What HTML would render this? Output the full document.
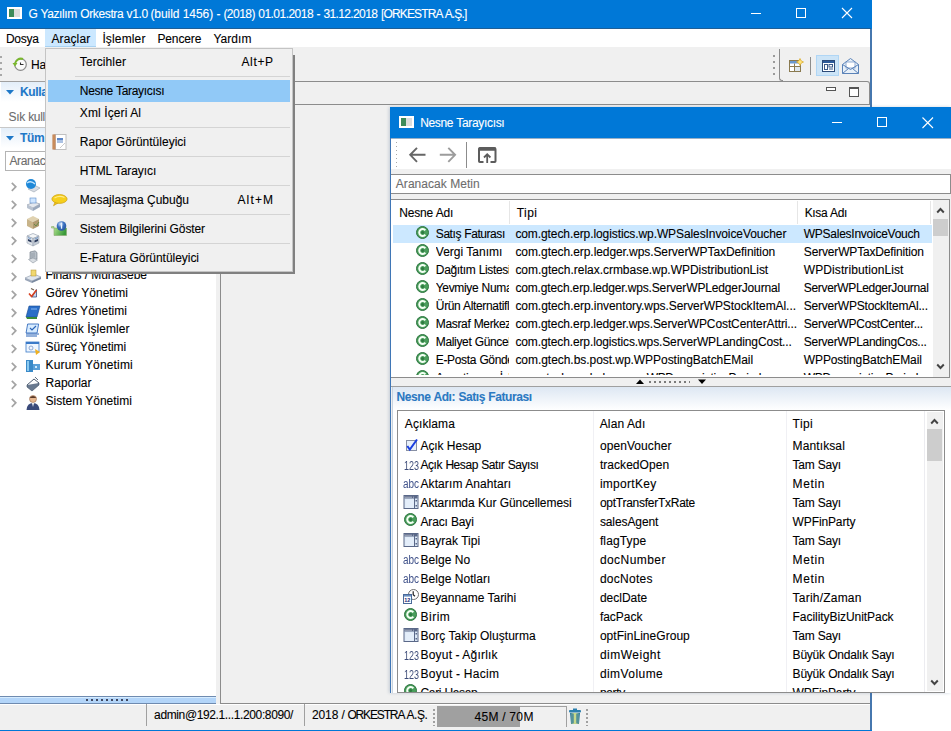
<!DOCTYPE html>
<html><head><meta charset="utf-8">
<style>
*{margin:0;padding:0;box-sizing:border-box}
html,body{width:951px;height:731px;overflow:hidden;background:#fff;position:relative;font-family:"Liberation Sans",sans-serif;font-size:12px;color:#000}
.a{position:absolute}
.t{position:absolute;white-space:nowrap;-webkit-text-stroke:0.1px currentColor}
</style></head><body>
<svg width="0" height="0" style="position:absolute"><defs>
<symbol id="cg" viewBox="0 0 13 13"><circle cx="6.5" cy="6.5" r="6" fill="#4a9e5c" stroke="#2e7440" stroke-width="1"/><path d="M9.3 4.4A3.4 3.4 0 1 0 9.3 8.6" stroke="#f4fff4" stroke-width="2" fill="none"/><circle cx="6.6" cy="6.5" r="1.5" fill="#2e7a40"/></symbol>
<symbol id="chk" viewBox="0 0 17 17"><rect x="5.5" y="4.5" width="10" height="10" fill="#e8f0fa" stroke="#8890a4"/><path d="M6.3 10L8.8 13.5L16 3.5" stroke="#1a3fe0" stroke-width="2" fill="none"/></symbol>
<symbol id="tbl" viewBox="0 0 17 17"><rect x="1" y="2.5" width="14" height="13" fill="#dce8f6" stroke="#5a6888"/><rect x="1.5" y="3" width="13" height="2.5" fill="#5a6888"/><path d="M2.5 4.2H9M10.5 4.2H11.5" stroke="#fff" stroke-width="1" stroke-dasharray="1 1"/><path d="M11.5 3V15.5" stroke="#5a6888"/><rect x="12.5" y="7" width="1.5" height="1.5" fill="#5a6888"/><rect x="12.5" y="12" width="1.5" height="1.5" fill="#5a6888"/><rect x="2.5" y="6.5" width="8.5" height="8.5" fill="#e4eefa"/></symbol>
<symbol id="cal" viewBox="0 0 18 17"><circle cx="11.5" cy="6.5" r="5" fill="#fff" stroke="#707070" stroke-width="1"/><path d="M11.2 3.3V6.8L13 8.3" stroke="#222" stroke-width="1.2" fill="none"/><rect x="1.5" y="6.5" width="8" height="9" fill="#fff" stroke="#4a6a9a"/><rect x="2" y="7" width="7" height="1.6" fill="#6a90c0"/><text x="2.3" y="14.3" font-family="Liberation Sans" font-weight="bold" font-size="5.5" fill="#1a2a7a">12</text></symbol>
<symbol id="chev" viewBox="0 0 8 10"><path d="M1.8 0.8L5.8 4.8L1.8 8.8" stroke="#a4a4a4" stroke-width="1.7" fill="none"/></symbol>
</defs></svg>
<div class="a" style="left:0;top:0;width:872px;height:731px;background:#f0f0f0"></div>
<div class="a" style="left:0;top:0;width:872px;height:29px;background:#0078d7"></div>
<div class="a" style="left:0;top:28px;width:871px;height:1px;background:#1f5f96"></div>
<div class="a" style="left:7px;top:7px;width:15px;height:12px;background:#fff"></div>
<div class="a" style="left:9px;top:9px;width:5px;height:8px;background:#3d8b5a"></div>
<div class="a" style="left:14px;top:9px;width:6px;height:8px;background:#ddd"></div>
<div class="t" style="left:28.4px;top:5px;line-height:18px;height:18px;letter-spacing:-0.376px;word-spacing:0.376px;color:#fff">G Yazılım Orkestra v1.0</div>
<div class="t" style="left:150.4px;top:5px;line-height:18px;height:18px;letter-spacing:-0.064px;word-spacing:0.064px;color:#fff">(build 1456) -</div>
<div class="t" style="left:223.4px;top:5px;line-height:18px;height:18px;letter-spacing:-0.526px;word-spacing:0.526px;color:#fff">(2018) 01.01.2018 -</div>
<div class="t" style="left:323.4px;top:5px;line-height:18px;height:18px;letter-spacing:-0.618px;word-spacing:0.618px;color:#fff">31.12.2018</div>
<div class="t" style="left:380.9px;top:5px;line-height:18px;height:18px;letter-spacing:-0.838px;word-spacing:0.838px;color:#fff">[ORKESTRA A.Ş.]</div>
<div class="a" style="left:751px;top:13px;width:10px;height:1px;background:#fff"></div>
<div class="a" style="left:796px;top:8px;width:10px;height:10px;border:1px solid #fff"></div>
<svg class="a" style="left:841px;top:7px" width="12" height="12"><path d="M1 1L11 11M11 1L1 11" stroke="#fff" stroke-width="1.1"/></svg>
<div class="a" style="left:870px;top:29px;width:2px;height:702px;background:#4677ae"></div>
<div class="a" style="left:0;top:29px;width:870px;height:18px;background:#fff"></div>
<div class="a" style="left:45px;top:29px;width:51px;height:18px;background:#cce8ff;border-bottom:1px solid #a8d2f2"></div>
<div class="t" style="left:5.9px;top:30px;line-height:18px;height:18px;letter-spacing:-0.253px;word-spacing:0.253px">Dosya</div>
<div class="t" style="left:51.4px;top:30px;line-height:18px;height:18px;letter-spacing:0.132px;word-spacing:-0.132px">Araçlar</div>
<div class="t" style="left:102.4px;top:30px;line-height:18px;height:18px;letter-spacing:0.142px;word-spacing:-0.142px">İşlemler</div>
<div class="t" style="left:157.4px;top:30px;line-height:18px;height:18px;letter-spacing:-0.116px;word-spacing:0.116px">Pencere</div>
<div class="t" style="left:213.4px;top:30px;line-height:18px;height:18px;letter-spacing:0.043px;word-spacing:-0.043px">Yardım</div>
<div class="a" style="left:0;top:81px;width:215px;height:1px;background:#a0a0a0"></div>
<div class="a" style="left:0;top:56px;width:2px;height:20px;background:repeating-linear-gradient(#a8a8a8 0 2px,transparent 2px 6px)"></div>
<svg class="a" style="left:11px;top:57px" width="17" height="15" viewBox="0 0 17 15"><circle cx="9.5" cy="7.5" r="5.8" fill="#fafafa" stroke="#8a8a8a" stroke-width="1.2"/><path d="M9.5 5.5V7.5H12.5" stroke="#333" stroke-width="1.1" fill="none"/><path d="M4 7.5A6 6 0 0 1 12 2" stroke="#7ab82e" stroke-width="2" fill="none"/><path d="M1.5 6L4 9.5L6.5 6Z" fill="#7ab82e"/></svg>
<div class="t" style="left:31.1px;top:56px;line-height:18px;height:18px;letter-spacing:-0.350px;word-spacing:0.350px">Hazır</div>
<div class="a" style="left:773px;top:55px;width:2px;height:21px;background:repeating-linear-gradient(#9a9a9a 0 2px,transparent 2px 6px)"></div>
<div class="a" style="left:779px;top:49px;width:4px;height:32px;border-left:1px solid #8c8c8c;border-bottom:1px solid #8c8c8c;border-bottom-left-radius:3px"></div>
<svg class="a" style="left:789px;top:58px" width="15" height="15" viewBox="0 0 15 15"><rect x="0.5" y="2.5" width="11" height="11" fill="#fff" stroke="#8a7a50"/><rect x="1" y="3" width="10" height="2.5" fill="#6a98d0"/><path d="M0.5 8.5H11.5M5.5 5.5V13.5" stroke="#8a7a50"/><rect x="6" y="9" width="5" height="4" fill="#dfe8f0"/><path d="M11 0.5L12.2 2.8L14.5 4L12.2 5.2L11 7.5L9.8 5.2L7.5 4L9.8 2.8Z" fill="#ffe680" stroke="#d9a520" stroke-width="0.7"/></svg>
<div class="a" style="left:810px;top:57px;width:1px;height:18px;background:#8c8c8c"></div>
<div class="a" style="left:816px;top:55px;width:23px;height:21px;background:#cce4f7;border:1px solid #b0d6f5"></div>
<svg class="a" style="left:822px;top:60px" width="14" height="13" viewBox="0 0 14 13"><rect x="0.5" y="0.5" width="12" height="11" fill="#fff" stroke="#2c4a78"/><rect x="1" y="1" width="11" height="2" fill="#2c5a9a"/><rect x="2.5" y="4.5" width="3" height="5" fill="#fff" stroke="#3a5a8a"/><rect x="7" y="4.5" width="3.5" height="2.5" fill="#fff" stroke="#3a5a8a"/><path d="M7 9H11" stroke="#3a5a8a"/></svg>
<svg class="a" style="left:842px;top:58px" width="17" height="16" viewBox="0 0 17 16"><path d="M0.5 6.5L8.5 0.5L16.5 6.5V15.5H0.5Z" fill="#e8f0f8" stroke="#5a82b8"/><rect x="4" y="4" width="9" height="6" fill="#fff" stroke="#7a9ac8" stroke-width="0.8"/><path d="M0.5 6.5L8.5 11.5L16.5 6.5M0.5 15.5L6.5 10.5M16.5 15.5L10.5 10.5" stroke="#5a82b8" fill="none"/></svg>
<div class="a" style="left:0;top:82px;width:216px;height:614px;background:#fff"></div>
<div class="a" style="left:1px;top:82px;width:215px;height:20px;background:linear-gradient(#e3eef9,#fff)"></div>
<svg class="a" style="left:6px;top:90px" width="8" height="5"><path d="M0 0H8L4 4.5Z" fill="#1e78c8"/></svg>
<div class="t" style="left:20.0px;top:83px;line-height:18px;height:18px;letter-spacing:-0.350px;word-spacing:0.350px;font-weight:bold;color:#1e78c8">Kullanıcı Menüsü</div>
<div class="t" style="left:8.6px;top:108px;line-height:18px;height:18px;letter-spacing:-0.350px;word-spacing:0.350px;color:#6d6d6d">Sık kullanılanlar</div>
<div class="a" style="left:0;top:127px;width:216px;height:1px;background:#c8c8c8"></div>
<div class="a" style="left:1px;top:128px;width:215px;height:20px;background:linear-gradient(#e3eef9,#fff)"></div>
<svg class="a" style="left:6px;top:136px" width="8" height="5"><path d="M0 0H8L4 4.5Z" fill="#1e78c8"/></svg>
<div class="t" style="left:20.0px;top:129px;line-height:18px;height:18px;letter-spacing:-0.350px;word-spacing:0.350px;font-weight:bold;color:#1e78c8">Tüm Menüler</div>
<div class="a" style="left:5px;top:151px;width:206px;height:20px;border:1px solid #b4b4b4;background:#fff"></div>
<div class="t" style="left:9.4px;top:152px;line-height:18px;height:18px;letter-spacing:-0.350px;word-spacing:0.350px;color:#6d6d6d">Aranacak Metin</div>
<svg class="a" style="left:10px;top:182px" width="8" height="10"><use href="#chev"/></svg>
<svg class="a" style="left:25px;top:178px" width="16" height="16" viewBox="0 0 16 16"><path d="M3 11L9 7L15 10L9 14Z" fill="#d8dde4" stroke="#9aa4b0" stroke-width="0.6"/><circle cx="6" cy="6" r="5" fill="#1e88d8"/><path d="M2 5Q6 2 10 6" stroke="#bfe4ff" stroke-width="1.3" fill="none"/></svg>
<div class="t" style="left:45.6px;top:176px;line-height:18px;height:18px;letter-spacing:-0.350px;word-spacing:0.350px">Genel Tanımlar</div>
<svg class="a" style="left:10px;top:200px" width="8" height="10"><use href="#chev"/></svg>
<svg class="a" style="left:25px;top:196px" width="16" height="16" viewBox="0 0 16 16"><path d="M2 9L9 6L15 8L8 12Z" fill="#e4e8ee" stroke="#8a94a4" stroke-width="0.6"/><path d="M2 9V12L8 15V12Z" fill="#b8c2d0"/><path d="M8 12V15L15 11V8Z" fill="#9aa8bc"/><rect x="5" y="2" width="6" height="5" fill="#cfe6ff" stroke="#5a8ac8" stroke-width="0.6"/></svg>
<div class="t" style="left:45.6px;top:194px;line-height:18px;height:18px;letter-spacing:-0.350px;word-spacing:0.350px">Satış Yönetimi</div>
<svg class="a" style="left:10px;top:218px" width="8" height="10"><use href="#chev"/></svg>
<svg class="a" style="left:25px;top:214px" width="16" height="16" viewBox="0 0 16 16"><path d="M2 5L8 2L14 5L8 8Z" fill="#e0d2b0"/><path d="M2 5V12L8 15V8Z" fill="#c8b48a"/><path d="M8 8V15L14 12V5Z" fill="#b09a70"/><path d="M9 10L11 12L14 8" stroke="#6a8a4a" stroke-width="1" fill="none"/></svg>
<div class="t" style="left:45.6px;top:212px;line-height:18px;height:18px;letter-spacing:-0.350px;word-spacing:0.350px">Stok Yönetimi</div>
<svg class="a" style="left:10px;top:236px" width="8" height="10"><use href="#chev"/></svg>
<svg class="a" style="left:25px;top:232px" width="16" height="15" viewBox="0 0 16 15"><path d="M2 4L8 1.5L14 4L8 6.5Z" fill="#f4f6f8" stroke="#8a96a6" stroke-width="0.6"/><path d="M2 4V11L8 14V6.5Z" fill="#dfe4ea" stroke="#8a96a6" stroke-width="0.5"/><path d="M8 6.5V14L14 11V4Z" fill="#c4ccd6" stroke="#8a96a6" stroke-width="0.5"/><path d="M3 7L6.5 8.5V10.5L3 9Z" fill="#2a3a5a"/><path d="M9.5 8.5L13 7V9L9.5 10.5Z" fill="#2a3a5a"/><path d="M3 5.5L6 7M13 5.5L10 7" stroke="#5a8ac8" stroke-width="0.8"/></svg>
<div class="t" style="left:45.6px;top:230px;line-height:18px;height:18px;letter-spacing:-0.350px;word-spacing:0.350px">Üretim Yönetimi</div>
<svg class="a" style="left:10px;top:254px" width="8" height="10"><use href="#chev"/></svg>
<svg class="a" style="left:27px;top:250px" width="12" height="14" viewBox="0 0 12 14"><path d="M3 2L8 0.8L10 2.5V9L5 10.5L3 9Z" fill="#b8c0c8" stroke="#6a7480" stroke-width="0.6"/><path d="M1.5 9.5L6 8L10.5 10L6 13Z" fill="#d8dde2" stroke="#7a8490" stroke-width="0.5"/><path d="M5 3V8M7 2.5V7.5" stroke="#8a949e" stroke-width="0.8"/></svg>
<div class="t" style="left:45.6px;top:248px;line-height:18px;height:18px;letter-spacing:-0.350px;word-spacing:0.350px">Bakım Yönetimi</div>
<svg class="a" style="left:10px;top:272px" width="8" height="10"><use href="#chev"/></svg>
<svg class="a" style="left:24px;top:268px" width="18" height="16" viewBox="0 0 18 16"><path d="M1 10L10 6L17 9L8 13Z" fill="#dfe6ee" stroke="#8a96a8" stroke-width="0.6"/><path d="M1 10V12L8 15V13Z" fill="#9aa6b8"/><path d="M8 13V15L17 11V9Z" fill="#7a8aa0"/><rect x="7" y="2" width="5" height="6" fill="#f0d870" stroke="#b09030" stroke-width="0.5"/></svg>
<div class="t" style="left:45.6px;top:266px;line-height:18px;height:18px;letter-spacing:-0.047px;word-spacing:0.047px">Finans / Muhasebe</div>
<svg class="a" style="left:10px;top:290px" width="8" height="10"><use href="#chev"/></svg>
<svg class="a" style="left:27px;top:287px" width="12" height="12" viewBox="0 0 12 12"><path d="M4 1.5L7 3" stroke="#706050" stroke-width="1.2"/><path d="M9.5 2.5V10H5Z" fill="#c8d8f0" stroke="#2a3a6a" stroke-width="0.7"/><path d="M2 6.5L4.5 9.5L9.5 3" stroke="#d84020" stroke-width="1.6" fill="none"/></svg>
<div class="t" style="left:45.6px;top:284px;line-height:18px;height:18px;letter-spacing:-0.008px;word-spacing:0.008px">Görev Yönetimi</div>
<svg class="a" style="left:10px;top:308px" width="8" height="10"><use href="#chev"/></svg>
<svg class="a" style="left:25px;top:304px" width="16" height="16" viewBox="0 0 16 16"><path d="M4 2H15L12 13H1Z" fill="#2a6ec8" stroke="#1a4a90" stroke-width="0.6"/><path d="M1 13L2 15H12L12 13" fill="#3a8a3a"/><path d="M6 5H12" stroke="#9ccaff" stroke-width="0.8"/></svg>
<div class="t" style="left:45.6px;top:302px;line-height:18px;height:18px;letter-spacing:0.011px;word-spacing:-0.011px">Adres Yönetimi</div>
<svg class="a" style="left:10px;top:326px" width="8" height="10"><use href="#chev"/></svg>
<svg class="a" style="left:25px;top:322px" width="16" height="16" viewBox="0 0 16 16"><rect x="3" y="2" width="11" height="9" fill="#d8ecff" stroke="#2a64b8" stroke-width="0.8" transform="skewX(-10)"/><path d="M5 6L7 8L11 4" stroke="#2a64b8" stroke-width="1.2" fill="none"/><path d="M1 12H14M1 14H12" stroke="#2a64b8" stroke-width="1"/></svg>
<div class="t" style="left:45.6px;top:320px;line-height:18px;height:18px;letter-spacing:0.034px;word-spacing:-0.034px">Günlük İşlemler</div>
<svg class="a" style="left:10px;top:344px" width="8" height="10"><use href="#chev"/></svg>
<svg class="a" style="left:25px;top:340px" width="16" height="16" viewBox="0 0 16 16"><rect x="1" y="2" width="13" height="10" fill="#eef6ff" stroke="#3a7ac8" stroke-width="0.8"/><rect x="1" y="2" width="13" height="2" fill="#3a7ac8"/><circle cx="6" cy="8" r="2" fill="none" stroke="#6a8ac0" stroke-width="0.7"/><path d="M10 9L15 12L11 15Z" fill="#f0b020"/></svg>
<div class="t" style="left:45.6px;top:338px;line-height:18px;height:18px;letter-spacing:-0.047px;word-spacing:0.047px">Süreç Yönetimi</div>
<svg class="a" style="left:10px;top:362px" width="8" height="10"><use href="#chev"/></svg>
<svg class="a" style="left:25px;top:358px" width="16" height="16" viewBox="0 0 16 16"><rect x="1" y="2" width="7" height="12" fill="#3a8ac8"/><rect x="2" y="3" width="2" height="10" fill="#8ccaf0"/><rect x="8" y="6" width="7" height="6" fill="#5aa0d8"/><rect x="10" y="8" width="2" height="2" fill="#d0ecff"/></svg>
<div class="t" style="left:45.6px;top:356px;line-height:18px;height:18px;letter-spacing:0.170px;word-spacing:-0.170px">Kurum Yönetimi</div>
<svg class="a" style="left:10px;top:380px" width="8" height="10"><use href="#chev"/></svg>
<svg class="a" style="left:25px;top:376px" width="16" height="16" viewBox="0 0 16 16"><path d="M2 9L9 3L14 7L7 13Z" fill="#fff" stroke="#3a4a60" stroke-width="0.9"/><path d="M2 9V11L7 15L14 9V7" fill="#6a7a90" stroke="#3a4a60" stroke-width="0.6"/><path d="M10 1L13 4" stroke="#3a4a60" stroke-width="0.8"/></svg>
<div class="t" style="left:45.6px;top:374px;line-height:18px;height:18px;letter-spacing:-0.017px;word-spacing:0.017px">Raporlar</div>
<svg class="a" style="left:10px;top:398px" width="8" height="10"><use href="#chev"/></svg>
<svg class="a" style="left:25px;top:394px" width="16" height="16" viewBox="0 0 16 16"><circle cx="8" cy="5" r="3.5" fill="#e8b890" stroke="#8a5a3a" stroke-width="0.5"/><path d="M4.5 4Q8 0 11.5 4" fill="#5a3a2a"/><path d="M1.5 16Q2 9 8 9Q14 9 14.5 16Z" fill="#3a4a7a"/><path d="M7 9L8 13L9 9Z" fill="#fff"/></svg>
<div class="t" style="left:45.6px;top:392px;line-height:18px;height:18px;letter-spacing:-0.015px;word-spacing:0.015px">Sistem Yönetimi</div>
<div class="a" style="left:0;top:696px;width:216px;height:8px;background:linear-gradient(#6f8bb0 0 1px,#d6ecff 1px 2px,#b3d5f9 2px 7px,#6f8bb0 7px 8px)"></div>
<div class="a" style="left:86px;top:699px;width:43px;height:2px;background:repeating-linear-gradient(90deg,#404860 0 2px,transparent 2px 5px)"></div>
<div class="a" style="left:220px;top:81px;width:650px;height:623px;border-left:1px solid #8c8c8c;border-bottom:1px solid #8c8c8c;background:#f0f0f0"></div>
<div class="a" style="left:220px;top:81px;width:650px;height:24px;border-top:1px solid #8c8c8c;border-bottom:1px solid #8c8c8c;border-right:1px solid #8c8c8c;border-top-right-radius:3px;background:#f0f0f0"></div>
<div class="a" style="left:826px;top:87px;width:10px;height:4px;border:1px solid #555;background:#fff"></div>
<div class="a" style="left:849px;top:87px;width:10px;height:10px;border:1px solid #555;border-top-width:2px;background:#fff"></div>
<div class="a" style="left:0;top:704px;width:870px;height:26px;background:#f0f0f0;border-top:1px solid #fff"></div>
<div class="a" style="left:0;top:730px;width:872px;height:1px;background:#0078d7"></div>
<div class="a" style="left:146px;top:704px;width:1px;height:22px;background:#a0a0a0"></div>
<div class="t" style="left:154.1px;top:706px;line-height:18px;height:18px;letter-spacing:-0.375px;word-spacing:0.375px">admin@192.1...1.200:8090/</div>
<div class="a" style="left:304px;top:704px;width:1px;height:22px;background:#a0a0a0"></div>
<div class="t" style="left:311.9px;top:706px;line-height:18px;height:18px;letter-spacing:-0.091px;word-spacing:0.091px">2018 /</div>
<div class="t" style="left:347.4px;top:706px;line-height:18px;height:18px;letter-spacing:-1.145px;word-spacing:1.145px">ORKESTRA</div>
<div class="t" style="left:406.4px;top:706px;line-height:18px;height:18px;letter-spacing:-0.392px;word-spacing:0.392px">A.Ş.</div>
<div class="a" style="left:433px;top:709px;width:2px;height:17px;background:repeating-linear-gradient(#a0a0a0 0 2px,transparent 2px 4px)"></div>
<div class="a" style="left:437px;top:706px;width:130px;height:21px;background:#f0f0f0;border-top:1px solid #a0a0a0;border-right:1px solid #a0a0a0"></div>
<div class="a" style="left:437px;top:707px;width:83px;height:20px;background:#a0a0a0"></div>
<div class="t" style="left:474.4px;top:708px;line-height:18px;height:18px;letter-spacing:0.385px;word-spacing:-0.385px">45M / 70M</div>
<svg class="a" style="left:568px;top:708px" width="14" height="17" viewBox="0 0 14 17"><defs><linearGradient id="tg" x1="0" x2="1"><stop offset="0" stop-color="#1c6fa0"/><stop offset=".5" stop-color="#d8e48a"/><stop offset="1" stop-color="#1c6fa0"/></linearGradient></defs><rect x="1" y="2" width="12" height="2.5" rx="1" fill="#2a7fae"/><rect x="5" y="0.5" width="4" height="2" fill="#2a7fae"/><path d="M2 5H12L11 16H3Z" fill="url(#tg)"/><path d="M5 6V15M9 6V15" stroke="#1c6fa0" stroke-width="0.8"/></svg>
<div class="a" style="left:586px;top:709px;width:2px;height:17px;background:repeating-linear-gradient(#a0a0a0 0 2px,transparent 2px 4px)"></div>
<div class="a" style="left:52px;top:55px;width:242.5px;height:218.5px;background:#808080;filter:blur(0.6px)"></div>
<div class="a" style="left:45px;top:48px;width:248px;height:224px;background:#f0f0f0;border:1px solid #c4c4c4"></div>
<div class="a" style="left:48px;top:80px;width:242px;height:22px;background:#91c9f7"></div>
<div class="a" style="left:75px;top:76px;width:215px;height:1px;background:#d4d4d4"></div>
<div class="a" style="left:75px;top:127px;width:215px;height:1px;background:#d4d4d4"></div>
<div class="a" style="left:75px;top:156px;width:215px;height:1px;background:#d4d4d4"></div>
<div class="a" style="left:75px;top:185px;width:215px;height:1px;background:#d4d4d4"></div>
<div class="a" style="left:75px;top:214px;width:215px;height:1px;background:#d4d4d4"></div>
<div class="a" style="left:75px;top:243px;width:215px;height:1px;background:#d4d4d4"></div>
<div class="t" style="left:79.8px;top:53px;line-height:18px;height:18px;letter-spacing:0.094px;word-spacing:-0.094px">Tercihler</div>
<div class="t" style="left:241.4px;top:53px;line-height:18px;height:18px;letter-spacing:0.671px;word-spacing:-0.671px">Alt+P</div>
<div class="t" style="left:79.8px;top:82px;line-height:18px;height:18px;letter-spacing:-0.319px;word-spacing:0.319px">Nesne Tarayıcısı</div>
<div class="t" style="left:79.8px;top:104px;line-height:18px;height:18px;letter-spacing:0.125px;word-spacing:-0.125px">Xml İçeri Al</div>
<div class="t" style="left:79.8px;top:133px;line-height:18px;height:18px;letter-spacing:0.009px;word-spacing:-0.009px">Rapor Görüntüleyici</div>
<div class="t" style="left:79.8px;top:162px;line-height:18px;height:18px;letter-spacing:-0.083px;word-spacing:0.083px">HTML Tarayıcı</div>
<div class="t" style="left:79.8px;top:191px;line-height:18px;height:18px;letter-spacing:-0.013px;word-spacing:0.013px">Mesajlaşma Çubuğu</div>
<div class="t" style="left:237.4px;top:191px;line-height:18px;height:18px;letter-spacing:1.173px;word-spacing:-1.173px">Alt+M</div>
<div class="t" style="left:79.8px;top:220px;line-height:18px;height:18px;letter-spacing:-0.094px;word-spacing:0.094px">Sistem Bilgilerini Göster</div>
<div class="t" style="left:79.8px;top:249px;line-height:18px;height:18px;letter-spacing:-0.042px;word-spacing:0.042px">E-Fatura Görüntüleyici</div>
<svg class="a" style="left:52px;top:134px" width="15" height="16" viewBox="0 0 15 16"><rect x="3" y="0.5" width="11" height="15" fill="#fff" stroke="#c0c0c0"/><rect x="0.5" y="0.5" width="3" height="15" fill="#b06a3a"/><path d="M0.5 2H3M0.5 4H3M0.5 6H3M0.5 8H3M0.5 10H3M0.5 12H3M0.5 14H3" stroke="#f0c090" stroke-width="0.8"/><rect x="5" y="4" width="6" height="2.5" fill="#5b86c8"/><rect x="5" y="7.5" width="6" height="1" fill="#5b86c8"/><path d="M8 14L13 9" stroke="#aaa" stroke-width="0.6"/></svg>
<svg class="a" style="left:51px;top:194px" width="17" height="13" viewBox="0 0 17 13"><path d="M4 8L2.5 11.8L7 9Z" fill="#f2c418" stroke="#c89a10" stroke-width="0.6"/><ellipse cx="8.5" cy="5" rx="7.6" ry="4.4" fill="#f6cf1c" stroke="#d0a514" stroke-width="0.8"/><path d="M3.5 4Q8.5 1.2 13.5 3.5" stroke="#ffeb8a" stroke-width="1.2" fill="none"/></svg>
<svg class="a" style="left:51px;top:221px" width="16" height="15" viewBox="0 0 16 15"><defs><linearGradient id="sg" x1="0" x2="1" y1="0" y2="0.3"><stop offset="0" stop-color="#c8f0a0"/><stop offset="1" stop-color="#3a9a3a"/></linearGradient><radialGradient id="bg2" cx=".4" cy=".3" r=".7"><stop offset="0" stop-color="#d8e8ff"/><stop offset=".5" stop-color="#3a70c0"/><stop offset="1" stop-color="#2a58a0"/></radialGradient></defs><path d="M0.5 5.5H3V14.5H15.5V7H0.5Z" fill="url(#sg)" stroke="#8aa870" stroke-width="0.6"/><circle cx="10.5" cy="5" r="4.8" fill="url(#bg2)"/><rect x="9.9" y="3.2" width="1.3" height="4.5" fill="#f0f8ff"/><circle cx="10.55" cy="2.2" r="0.7" fill="#f0f8ff"/></svg>
<div class="a" style="left:390px;top:107px;width:561px;height:586px;background:#f0f0f0;border-left:1px solid #3f76b6;box-shadow:-1px 0 3px rgba(60,90,130,.25)"></div>
<div class="a" style="left:390px;top:107px;width:561px;height:31px;background:#0078d7"></div>
<div class="a" style="left:399px;top:116px;width:15px;height:12px;background:#fff"></div>
<div class="a" style="left:401px;top:118px;width:5px;height:8px;background:#3d8b5a"></div>
<div class="a" style="left:406px;top:118px;width:6px;height:8px;background:#ddd"></div>
<div class="t" style="left:420.2px;top:114px;line-height:18px;height:18px;letter-spacing:-0.333px;word-spacing:0.333px;color:#fff">Nesne Tarayıcısı</div>
<div class="a" style="left:832px;top:122px;width:10px;height:1px;background:#fff"></div>
<div class="a" style="left:877px;top:117px;width:10px;height:10px;border:1px solid #fff"></div>
<svg class="a" style="left:922px;top:117px" width="12" height="12"><path d="M0.5 0.5L11 11M11 0.5L0.5 11" stroke="#fff" stroke-width="1.1"/></svg>
<div class="a" style="left:391px;top:138px;width:560px;height:31px;background:#fff"></div>
<div class="a" style="left:391px;top:138px;width:560px;height:1px;background:#9ab0c6"></div>
<div class="a" style="left:396px;top:142px;width:1px;height:26px;background:repeating-linear-gradient(#a8a8a8 0 1px,transparent 1px 4px)"></div>
<svg class="a" style="left:408px;top:146px" width="18" height="17" viewBox="0 0 18 17"><path d="M17.5 8.8H2.5M9 1.8L2.2 8.8L9 15.8" stroke="#666" stroke-width="1.9" fill="none"/></svg>
<svg class="a" style="left:439px;top:146px" width="18" height="17" viewBox="0 0 18 17"><path d="M0.8 8.8H15.8M9.3 1.8L16.1 8.8L9.3 15.8" stroke="#9c9c9c" stroke-width="1.9" fill="none"/></svg>
<div class="a" style="left:466px;top:142px;width:1px;height:26px;background:#8c8c8c"></div>
<svg class="a" style="left:477px;top:146px" width="20" height="18" viewBox="0 0 20 18"><path d="M6.5 16H2.8Q2 16 2 15.2V3.5Q2 2 3.5 2H17Q18.5 2 18.5 3.5V15.2Q18.5 16 17.7 16H13.5" stroke="#5c5c5c" stroke-width="2" fill="none"/><rect x="1.5" y="1.2" width="17.5" height="3.5" rx="1" fill="#5c5c5c"/><path d="M10.2 17V8.5M7 11.5L10.2 8.2L13.4 11.5" stroke="#5c5c5c" stroke-width="1.8" fill="none"/></svg>
<div class="a" style="left:391px;top:174px;width:560px;height:20px;background:#fff;border-top:1px solid #8c8c8c;border-bottom:1px solid #8c8c8c"></div>
<div class="a" style="left:950px;top:174px;width:1px;height:20px;background:#8c8c8c"></div>
<div class="t" style="left:395.8px;top:175px;line-height:18px;height:18px;letter-spacing:0.044px;word-spacing:-0.044px;color:#6d6d6d">Aranacak Metin</div>
<div class="a" style="left:391px;top:199px;width:559px;height:179px;background:#fff;border-top:1px solid #8c8c8c;border-right:1px solid #8c8c8c;border-bottom:1px solid #8c8c8c"></div>
<div class="a" style="left:509px;top:201px;width:1px;height:23px;background:#e6e6e6"></div>
<div class="a" style="left:797px;top:201px;width:1px;height:23px;background:#e6e6e6"></div>
<div class="a" style="left:930px;top:201px;width:1px;height:23px;background:#e6e6e6"></div>
<div class="t" style="left:399.2px;top:204px;line-height:18px;height:18px;letter-spacing:-0.176px;word-spacing:0.176px">Nesne Adı</div>
<div class="t" style="left:516.8px;top:204px;line-height:18px;height:18px;letter-spacing:0.403px;word-spacing:-0.403px">Tipi</div>
<div class="t" style="left:804.7px;top:204px;line-height:18px;height:18px;letter-spacing:-0.326px;word-spacing:0.326px">Kısa Adı</div>
<div class="a" style="left:393px;top:225px;width:539px;height:18px;background:#cce8ff"></div>
<div class="a" style="left:933px;top:200px;width:16px;height:177px;background:#f0f0f0"></div>
<svg class="a" style="left:936px;top:206px" width="9" height="8"><path d="M1.2 6.5L4.5 3L7.8 6.5" stroke="#444" stroke-width="1.9" fill="none"/></svg>
<div class="a" style="left:933px;top:219px;width:15px;height:17px;background:#cdcdcd"></div>
<svg class="a" style="left:936px;top:363px" width="9" height="8"><path d="M1.2 1.5L4.5 5L7.8 1.5" stroke="#444" stroke-width="1.9" fill="none"/></svg>
<div class="a" style="left:392px;top:225px;width:540px;height:150px;overflow:hidden">
<svg width="13" height="13" style="position:absolute;left:24px;top:1px"><use href="#cg"/></svg>
<div class="a" style="left:44px;top:0px;width:73px;height:18px;overflow:hidden"><div class="t" style="left:-0.2px;top:0px;line-height:18px;height:18px;letter-spacing:-0.441px;word-spacing:0.441px">Satış Faturası</div></div>
<div class="t" style="left:123.4px;top:0px;line-height:18px;height:18px;letter-spacing:-0.095px;word-spacing:0.095px">com.gtech.erp.logistics.wp.WPSalesInvoiceVoucher</div>
<div class="t" style="left:411.8px;top:0px;line-height:18px;height:18px;letter-spacing:-0.257px;word-spacing:0.257px">WPSalesInvoiceVouch</div>
<svg width="13" height="13" style="position:absolute;left:24px;top:19px"><use href="#cg"/></svg>
<div class="a" style="left:44px;top:18px;width:73px;height:18px;overflow:hidden"><div class="t" style="left:-0.2px;top:0px;line-height:18px;height:18px;letter-spacing:0.010px;word-spacing:-0.010px">Vergi Tanımı</div></div>
<div class="t" style="left:123.4px;top:18px;line-height:18px;height:18px;letter-spacing:-0.081px;word-spacing:0.081px">com.gtech.erp.ledger.wps.ServerWPTaxDefinition</div>
<div class="t" style="left:411.8px;top:18px;line-height:18px;height:18px;letter-spacing:-0.164px;word-spacing:0.164px">ServerWPTaxDefinition</div>
<svg width="13" height="13" style="position:absolute;left:24px;top:37px"><use href="#cg"/></svg>
<div class="a" style="left:44px;top:36px;width:73px;height:18px;overflow:hidden"><div class="t" style="left:-0.2px;top:0px;line-height:18px;height:18px;letter-spacing:-0.350px;word-spacing:0.350px">Dağıtım Listesi</div></div>
<div class="t" style="left:123.4px;top:36px;line-height:18px;height:18px;letter-spacing:-0.029px;word-spacing:0.029px">com.gtech.relax.crmbase.wp.WPDistributionList</div>
<div class="t" style="left:411.8px;top:36px;line-height:18px;height:18px;letter-spacing:0.093px;word-spacing:-0.093px">WPDistributionList</div>
<svg width="13" height="13" style="position:absolute;left:24px;top:55px"><use href="#cg"/></svg>
<div class="a" style="left:44px;top:54px;width:73px;height:18px;overflow:hidden"><div class="t" style="left:-0.2px;top:0px;line-height:18px;height:18px;letter-spacing:-0.350px;word-spacing:0.350px">Yevmiye Numaraları</div></div>
<div class="t" style="left:123.4px;top:54px;line-height:18px;height:18px;letter-spacing:-0.148px;word-spacing:0.148px">com.gtech.erp.ledger.wps.ServerWPLedgerJournal</div>
<div class="t" style="left:411.8px;top:54px;line-height:18px;height:18px;letter-spacing:-0.320px;word-spacing:0.320px">ServerWPLedgerJournal</div>
<svg width="13" height="13" style="position:absolute;left:24px;top:73px"><use href="#cg"/></svg>
<div class="a" style="left:44px;top:72px;width:73px;height:18px;overflow:hidden"><div class="t" style="left:-0.2px;top:0px;line-height:18px;height:18px;letter-spacing:-0.350px;word-spacing:0.350px">Ürün Alternatifleri</div></div>
<div class="t" style="left:123.4px;top:72px;line-height:18px;height:18px;letter-spacing:-0.067px;word-spacing:0.067px">com.gtech.erp.inventory.wps.ServerWPStockItemAl...</div>
<div class="t" style="left:411.8px;top:72px;line-height:18px;height:18px;letter-spacing:-0.214px;word-spacing:0.214px">ServerWPStockItemAl...</div>
<svg width="13" height="13" style="position:absolute;left:24px;top:91px"><use href="#cg"/></svg>
<div class="a" style="left:44px;top:90px;width:73px;height:18px;overflow:hidden"><div class="t" style="left:-0.2px;top:0px;line-height:18px;height:18px;letter-spacing:-0.350px;word-spacing:0.350px">Masraf Merkezi</div></div>
<div class="t" style="left:123.4px;top:90px;line-height:18px;height:18px;letter-spacing:-0.100px;word-spacing:0.100px">com.gtech.erp.ledger.wps.ServerWPCostCenterAttri...</div>
<div class="t" style="left:411.8px;top:90px;line-height:18px;height:18px;letter-spacing:-0.270px;word-spacing:0.270px">ServerWPCostCenter...</div>
<svg width="13" height="13" style="position:absolute;left:24px;top:109px"><use href="#cg"/></svg>
<div class="a" style="left:44px;top:108px;width:73px;height:18px;overflow:hidden"><div class="t" style="left:-0.2px;top:0px;line-height:18px;height:18px;letter-spacing:-0.350px;word-spacing:0.350px">Maliyet Güncelleme</div></div>
<div class="t" style="left:123.4px;top:108px;line-height:18px;height:18px;letter-spacing:-0.115px;word-spacing:0.115px">com.gtech.erp.logistics.wps.ServerWPLandingCost...</div>
<div class="t" style="left:411.8px;top:108px;line-height:18px;height:18px;letter-spacing:-0.286px;word-spacing:0.286px">ServerWPLandingCos...</div>
<svg width="13" height="13" style="position:absolute;left:24px;top:127px"><use href="#cg"/></svg>
<div class="a" style="left:44px;top:126px;width:73px;height:18px;overflow:hidden"><div class="t" style="left:-0.2px;top:0px;line-height:18px;height:18px;letter-spacing:-0.350px;word-spacing:0.350px">E-Posta Gönderimi</div></div>
<div class="t" style="left:123.4px;top:126px;line-height:18px;height:18px;letter-spacing:-0.045px;word-spacing:0.045px">com.gtech.bs.post.wp.WPPostingBatchEMail</div>
<div class="t" style="left:411.8px;top:126px;line-height:18px;height:18px;letter-spacing:-0.108px;word-spacing:0.108px">WPPostingBatchEMail</div>
<svg width="13" height="13" style="position:absolute;left:24px;top:145px"><use href="#cg"/></svg>
<div class="a" style="left:44px;top:144px;width:73px;height:18px;overflow:hidden"><div class="t" style="left:-0.2px;top:0px;line-height:18px;height:18px;letter-spacing:-0.350px;word-spacing:0.350px">Amortisman İşlemi</div></div>
<div class="t" style="left:123.4px;top:144px;line-height:18px;height:18px;letter-spacing:-0.350px;word-spacing:0.350px">com.gtech.erp.ledger.wps.WPDepreciationPeriod</div>
<div class="t" style="left:411.8px;top:144px;line-height:18px;height:18px;letter-spacing:-0.350px;word-spacing:0.350px">WPDepreciationPeriod</div>
</div>
<div class="a" style="left:391px;top:378px;width:560px;height:8px;background:#f0f0f0"></div>
<div class="a" style="left:391px;top:386px;width:560px;height:1px;background:#a0a0a0"></div>
<svg class="a" style="left:636px;top:379px" width="9" height="6"><path d="M0 5H8L4 0.5Z" fill="#000"/></svg>
<div class="a" style="left:649px;top:381px;width:43px;height:2px;background:repeating-linear-gradient(90deg,#7a7a7a 0 1.5px,transparent 1.5px 5px)"></div>
<svg class="a" style="left:698px;top:379px" width="9" height="6"><path d="M0 0.5H8L4 5Z" fill="#000"/></svg>
<div class="a" style="left:392px;top:387px;width:559px;height:306px;background:#fff;border-left:1px solid #c8d4e0"></div>
<div class="a" style="left:393px;top:387px;width:558px;height:23px;background:linear-gradient(#dde7f3,#ffffff)"></div>
<div class="t" style="left:396.6px;top:388px;line-height:18px;height:18px;letter-spacing:-0.419px;word-spacing:0.419px;font-weight:bold;color:#2b79c2">Nesne Adı: Satış Faturası</div>
<div class="a" style="left:397px;top:410px;width:548px;height:283px;background:#fff;border:1px solid #8c8c8c"></div>
<div class="a" style="left:593px;top:411px;width:1px;height:281px;background:#f0f0f4"></div>
<div class="a" style="left:786px;top:411px;width:1px;height:281px;background:#f0f0f4"></div>
<div class="a" style="left:924px;top:411px;width:1px;height:281px;background:#ececf0"></div>
<div class="t" style="left:404.8px;top:415px;line-height:18px;height:18px;letter-spacing:0.107px;word-spacing:-0.107px">Açıklama</div>
<div class="t" style="left:599.7px;top:415px;line-height:18px;height:18px;letter-spacing:0.139px;word-spacing:-0.139px">Alan Adı</div>
<div class="t" style="left:792.6px;top:415px;line-height:18px;height:18px;letter-spacing:0.403px;word-spacing:-0.403px">Tipi</div>
<div class="a" style="left:927px;top:412px;width:16px;height:279px;background:#f0f0f0"></div>
<svg class="a" style="left:930px;top:417px" width="9" height="8"><path d="M1.2 6.5L4.5 3L7.8 6.5" stroke="#444" stroke-width="1.9" fill="none"/></svg>
<div class="a" style="left:927px;top:429px;width:15px;height:32px;background:#cdcdcd"></div>
<svg class="a" style="left:930px;top:679px" width="9" height="8"><path d="M1.2 1.5L4.5 5L7.8 1.5" stroke="#444" stroke-width="1.9" fill="none"/></svg>
<div class="a" style="left:398px;top:436px;width:529px;height:256px;overflow:hidden">
<svg style="position:absolute;left:3px;top:0px" width="17" height="17"><use href="#chk"/></svg>
<div class="t" style="left:22.5px;top:1px;line-height:19px;height:19px;letter-spacing:-0.082px;word-spacing:0.082px">Açık Hesap</div>
<div class="t" style="left:201.9px;top:1px;line-height:19px;height:19px;letter-spacing:0.077px;word-spacing:-0.077px">openVoucher</div>
<div class="t" style="left:394.6px;top:1px;line-height:19px;height:19px;letter-spacing:0.106px;word-spacing:-0.106px">Mantıksal</div>
<div style="position:absolute;left:6px;top:20px;line-height:19px;font-size:13px;color:#3d4c78;transform:scaleX(.69);transform-origin:0 0;white-space:nowrap">123</div>
<div class="t" style="left:22.5px;top:20px;line-height:19px;height:19px;letter-spacing:-0.443px;word-spacing:0.443px">Açık Hesap Satır Sayısı</div>
<div class="t" style="left:201.9px;top:20px;line-height:19px;height:19px;letter-spacing:0.049px;word-spacing:-0.049px">trackedOpen</div>
<div class="t" style="left:394.6px;top:20px;line-height:19px;height:19px;letter-spacing:-0.253px;word-spacing:0.253px">Tam Sayı</div>
<div style="position:absolute;left:5px;top:39px;line-height:19px;font-size:12.3px;color:#40528a;transform:scaleX(.81);transform-origin:0 0;white-space:nowrap">abc</div>
<div class="t" style="left:22.5px;top:39px;line-height:19px;height:19px;letter-spacing:0.090px;word-spacing:-0.090px">Aktarım Anahtarı</div>
<div class="t" style="left:201.9px;top:39px;line-height:19px;height:19px;letter-spacing:0.285px;word-spacing:-0.285px">importKey</div>
<div class="t" style="left:394.6px;top:39px;line-height:19px;height:19px;letter-spacing:0.639px;word-spacing:-0.639px">Metin</div>
<svg style="position:absolute;left:5px;top:57px" width="17" height="17"><use href="#tbl"/></svg>
<div class="t" style="left:22.5px;top:58px;line-height:19px;height:19px;letter-spacing:-0.071px;word-spacing:0.071px">Aktarımda Kur Güncellemesi</div>
<div class="t" style="left:201.9px;top:58px;line-height:19px;height:19px;letter-spacing:-0.262px;word-spacing:0.262px">optTransferTxRate</div>
<div class="t" style="left:394.6px;top:58px;line-height:19px;height:19px;letter-spacing:-0.253px;word-spacing:0.253px">Tam Sayı</div>
<svg style="position:absolute;left:6px;top:77px" width="13" height="13"><use href="#cg"/></svg>
<div class="t" style="left:22.5px;top:77px;line-height:19px;height:19px;letter-spacing:-0.173px;word-spacing:0.173px">Aracı Bayi</div>
<div class="t" style="left:201.9px;top:77px;line-height:19px;height:19px;letter-spacing:-0.097px;word-spacing:0.097px">salesAgent</div>
<div class="t" style="left:394.6px;top:77px;line-height:19px;height:19px;letter-spacing:-0.123px;word-spacing:0.123px">WPFinParty</div>
<svg style="position:absolute;left:5px;top:95px" width="17" height="17"><use href="#tbl"/></svg>
<div class="t" style="left:22.5px;top:96px;line-height:19px;height:19px;letter-spacing:0.036px;word-spacing:-0.036px">Bayrak Tipi</div>
<div class="t" style="left:201.9px;top:96px;line-height:19px;height:19px;letter-spacing:0.134px;word-spacing:-0.134px">flagType</div>
<div class="t" style="left:394.6px;top:96px;line-height:19px;height:19px;letter-spacing:-0.253px;word-spacing:0.253px">Tam Sayı</div>
<div style="position:absolute;left:5px;top:115px;line-height:19px;font-size:12.3px;color:#40528a;transform:scaleX(.81);transform-origin:0 0;white-space:nowrap">abc</div>
<div class="t" style="left:22.5px;top:115px;line-height:19px;height:19px;letter-spacing:0.039px;word-spacing:-0.039px">Belge No</div>
<div class="t" style="left:201.9px;top:115px;line-height:19px;height:19px;letter-spacing:0.434px;word-spacing:-0.434px">docNumber</div>
<div class="t" style="left:394.6px;top:115px;line-height:19px;height:19px;letter-spacing:0.639px;word-spacing:-0.639px">Metin</div>
<div style="position:absolute;left:5px;top:134px;line-height:19px;font-size:12.3px;color:#40528a;transform:scaleX(.81);transform-origin:0 0;white-space:nowrap">abc</div>
<div class="t" style="left:22.5px;top:134px;line-height:19px;height:19px;letter-spacing:0.048px;word-spacing:-0.048px">Belge Notları</div>
<div class="t" style="left:201.9px;top:134px;line-height:19px;height:19px;letter-spacing:0.272px;word-spacing:-0.272px">docNotes</div>
<div class="t" style="left:394.6px;top:134px;line-height:19px;height:19px;letter-spacing:0.639px;word-spacing:-0.639px">Metin</div>
<svg style="position:absolute;left:4px;top:152px" width="18" height="17"><use href="#cal"/></svg>
<div class="t" style="left:22.5px;top:153px;line-height:19px;height:19px;letter-spacing:-0.018px;word-spacing:0.018px">Beyanname Tarihi</div>
<div class="t" style="left:201.9px;top:153px;line-height:19px;height:19px;letter-spacing:0.006px;word-spacing:-0.006px">declDate</div>
<div class="t" style="left:394.6px;top:153px;line-height:19px;height:19px;letter-spacing:0.211px;word-spacing:-0.211px">Tarih/Zaman</div>
<svg style="position:absolute;left:6px;top:172px" width="13" height="13"><use href="#cg"/></svg>
<div class="t" style="left:22.5px;top:172px;line-height:19px;height:19px;letter-spacing:0.493px;word-spacing:-0.493px">Birim</div>
<div class="t" style="left:201.9px;top:172px;line-height:19px;height:19px;letter-spacing:-0.014px;word-spacing:0.014px">facPack</div>
<div class="t" style="left:394.6px;top:172px;line-height:19px;height:19px;letter-spacing:-0.057px;word-spacing:0.057px">FacilityBizUnitPack</div>
<svg style="position:absolute;left:5px;top:190px" width="17" height="17"><use href="#tbl"/></svg>
<div class="t" style="left:22.5px;top:191px;line-height:19px;height:19px;letter-spacing:0.035px;word-spacing:-0.035px">Borç Takip Oluşturma</div>
<div class="t" style="left:201.9px;top:191px;line-height:19px;height:19px;letter-spacing:0.036px;word-spacing:-0.036px">optFinLineGroup</div>
<div class="t" style="left:394.6px;top:191px;line-height:19px;height:19px;letter-spacing:-0.253px;word-spacing:0.253px">Tam Sayı</div>
<div style="position:absolute;left:6px;top:210px;line-height:19px;font-size:13px;color:#3d4c78;transform:scaleX(.69);transform-origin:0 0;white-space:nowrap">123</div>
<div class="t" style="left:22.5px;top:210px;line-height:19px;height:19px;letter-spacing:0.195px;word-spacing:-0.195px">Boyut - Ağırlık</div>
<div class="t" style="left:201.9px;top:210px;line-height:19px;height:19px;letter-spacing:0.492px;word-spacing:-0.492px">dimWeight</div>
<div class="t" style="left:394.6px;top:210px;line-height:19px;height:19px;letter-spacing:-0.219px;word-spacing:0.219px">Büyük Ondalık Sayı</div>
<div style="position:absolute;left:6px;top:229px;line-height:19px;font-size:13px;color:#3d4c78;transform:scaleX(.69);transform-origin:0 0;white-space:nowrap">123</div>
<div class="t" style="left:22.5px;top:229px;line-height:19px;height:19px;letter-spacing:0.305px;word-spacing:-0.305px">Boyut - Hacim</div>
<div class="t" style="left:201.9px;top:229px;line-height:19px;height:19px;letter-spacing:0.442px;word-spacing:-0.442px">dimVolume</div>
<div class="t" style="left:394.6px;top:229px;line-height:19px;height:19px;letter-spacing:-0.219px;word-spacing:0.219px">Büyük Ondalık Sayı</div>
<svg style="position:absolute;left:6px;top:248px" width="13" height="13"><use href="#cg"/></svg>
<div class="t" style="left:22.5px;top:248px;line-height:19px;height:19px;letter-spacing:-0.350px;word-spacing:0.350px">Cari Hesap</div>
<div class="t" style="left:201.9px;top:248px;line-height:19px;height:19px;letter-spacing:-0.350px;word-spacing:0.350px">party</div>
<div class="t" style="left:394.6px;top:248px;line-height:19px;height:19px;letter-spacing:-0.123px;word-spacing:0.123px">WPFinParty</div>
</div>
</body></html>
